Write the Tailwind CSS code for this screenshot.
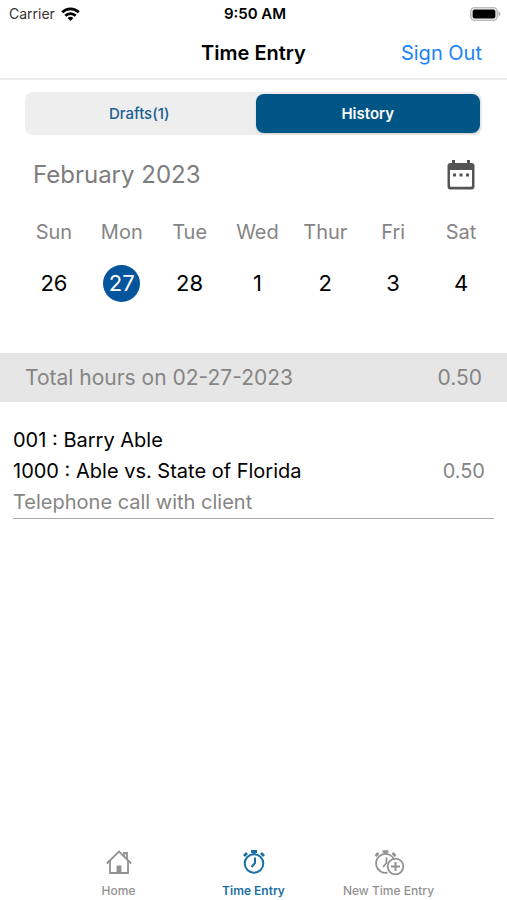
<!DOCTYPE html>
<html lang="en">
<head>
    <meta charset="UTF-8">
    <meta name="viewport" content="width=device-width, initial-scale=1.0">
    <title>Time Entry</title>
    <script src="https://cdn.jsdelivr.net/npm/@tailwindcss/browser@4"></script>
</head>
<body class="flex flex-col min-h-screen bg-white text-black font-['Inter','Liberation_Sans',sans-serif]">

<!-- status bar -->
<div class="grid grid-cols-3 items-center h-7 pl-[9px] pr-[6px]">
    <div class="flex items-center gap-1.5 text-sm text-[#333]">
        <span>Carrier</span>
        <svg class="w-[19px] h-[14px]" viewBox="0 0 19 14" fill="none" stroke="#000" stroke-width="2.8">
            <path d="M1.2 5.2a11.8 11.8 0 0 1 16.6 0"/>
            <path d="M4.3 8.8a7.4 7.4 0 0 1 10.4 0"/>
            <path d="M9.5 14 6.6 11.1a4.1 4.1 0 0 1 5.8 0z" fill="#000" stroke="none"/>
        </svg>
    </div>
    <span class="text-center text-[15px] font-semibold">9:50 AM</span>
    <svg class="justify-self-end w-[31px] h-[14px]" viewBox="0 0 31 14">
        <rect x="0.8" y="0.8" width="26.4" height="12.4" rx="3.8" fill="#fff" stroke="#bdbdbd" stroke-width="1.6"/>
        <rect x="2.6" y="2.6" width="22.8" height="8.8" rx="2" fill="#000"/>
        <path d="M28.6 4.6c2.4 1 2.4 3.8 0 4.8z" fill="#a8a8a8"/>
    </svg>
</div>

<header class="grid grid-cols-3 items-center h-[52px] px-[25px] border-b-2 border-[#ececec]">
    <h1 class="col-start-2 text-center text-xl font-semibold whitespace-nowrap">Time Entry</h1>
    <button class="justify-self-end text-xl text-[#1a83f7]">Sign Out</button>
</header>

<main class="flex-1">
    <div class="grid grid-cols-2 gap-1 h-[43px] mx-[25px] mt-3 p-0.5 rounded-lg bg-[#eee]">
        <button class="pt-0.5 text-[15px] font-medium text-[#1b6093]">Drafts(1)</button>
        <button class="pt-0.5 rounded-lg bg-[#005587] text-[15px] font-semibold text-white shadow">History</button>
    </div>

    <div class="flex items-center justify-between h-10 mt-5 pl-[33px] pr-8">
        <h2 class="text-2xl text-[#7d7d7d]">February 2023</h2>
        <button aria-label="Open calendar">
            <svg class="w-7 h-[30px]" viewBox="0 0 28 30">
                <path fill="#555" fill-rule="evenodd" d="M5 0h3v3h12V0h3v3h1.5A3 3 0 0 1 27.5 6v20.5a3 3 0 0 1-3 3h-21a3 3 0 0 1-3-3V6a3 3 0 0 1 3-3H5zM3 10v15.8a1 1 0 0 0 1 1h20a1 1 0 0 0 1-1V10z"/>
                <path fill="#555" d="M6 13.5h3v3H6zM12.5 13.5h3v3h-3zM19 13.5h3v3h-3z"/>
            </svg>
        </button>
    </div>

    <table class="table-fixed w-[calc(100%-32px)] ml-5 mt-5 text-center text-xl">
        <thead>
        <tr class="h-[34px] text-[#858585]">
            <th class="font-normal">Sun</th>
            <th class="font-normal">Mon</th>
            <th class="font-normal">Tue</th>
            <th class="font-normal">Wed</th>
            <th class="font-normal">Thur</th>
            <th class="font-normal">Fri</th>
            <th class="font-normal">Sat</th>
        </tr>
        </thead>
        <tbody>
        <tr class="h-[68px] text-[22px]">
            <td><button class="size-[37px] rounded-full">26</button></td>
            <td><button class="size-[37px] rounded-full bg-[#04559c] text-white" aria-pressed="true">27</button></td>
            <td><button class="size-[37px] rounded-full">28</button></td>
            <td><button class="size-[37px] rounded-full">1</button></td>
            <td><button class="size-[37px] rounded-full">2</button></td>
            <td><button class="size-[37px] rounded-full">3</button></td>
            <td><button class="size-[37px] rounded-full">4</button></td>
        </tr>
        </tbody>
    </table>

    <div class="flex items-center justify-between h-[49px] mt-9 px-[25px] bg-[#e6e6e6] text-[21px] text-[#858585]">
        <span>Total hours on 02-27-2023</span>
        <span>0.50</span>
    </div>

    <ul>
        <li class="flex items-center justify-between mx-[13px] mt-[23px] pr-[9px] border-b border-[#aaa] text-xl leading-[31px]">
            <div>
                <p>001 : Barry Able</p>
                <p>1000 : Able vs. State of Florida</p>
                <p class="text-[#858585]">Telephone call with client</p>
            </div>
            <span class="text-[#858585]">0.50</span>
        </li>
    </ul>
</main>

<!-- tab bar -->
<nav class="grid grid-cols-3 h-[51px] mx-[51px] text-xs font-medium text-[#929292]">
    <a href="#" class="flex flex-col items-center gap-2">
        <svg class="w-[26px] h-[26px]" viewBox="0 0 26 26" fill="none" stroke="currentColor" stroke-width="1.8">
            <path d="M.8 14.5 13 2.500l12.2 12"/>
            <path d="M4 12v12h18V12"/>
            <path d="M18 7V4h3v6.500"/>
            <path d="M11.500 24v-6.500h3V24z" fill="currentColor"/>
        </svg>
        <span>Home</span>
    </a>
    <a href="#" class="flex flex-col items-center gap-2 font-semibold text-[#1b6fa5]" aria-current="page">
        <svg class="w-[26px] h-[26px]" viewBox="0 0 26 26" fill="none" stroke="currentColor" stroke-width="2">
            <circle cx="13" cy="14.5" r="9.3"/>
            <path d="M10 2.500h6M13 2.500v3" stroke-width="2.8"/>
            <path d="m3 7 3-3M23 7l-3-3" stroke-width="2.8"/>
            <path d="M14 8.500V14l-3.500 4"/>
        </svg>
        <span>Time Entry</span>
    </a>
    <a href="#" class="flex flex-col items-center gap-2 whitespace-nowrap">
        <svg class="w-[32px] h-[26px]" viewBox="0 0 32 26" fill="none" stroke="currentColor" stroke-width="1.8">
            <path d="M14.500 23.600A9.500 9.500 0 1 1 21.300 10.800"/>
            <path d="M9.500 2.500h6M12.500 2.500v3" stroke-width="2.600"/>
            <path d="m2.500 7 3-3M22.500 7l-3-3" stroke-width="2.600"/>
            <path d="M13.500 8.500V14L10 18"/>
            <circle cx="22.500" cy="17.500" r="7.800"/>
            <path d="M22.500 13v9M18 17.500h9" stroke-width="2"/>
        </svg>
        <span>New Time Entry</span>
    </a>
</nav>

</body>
</html>
